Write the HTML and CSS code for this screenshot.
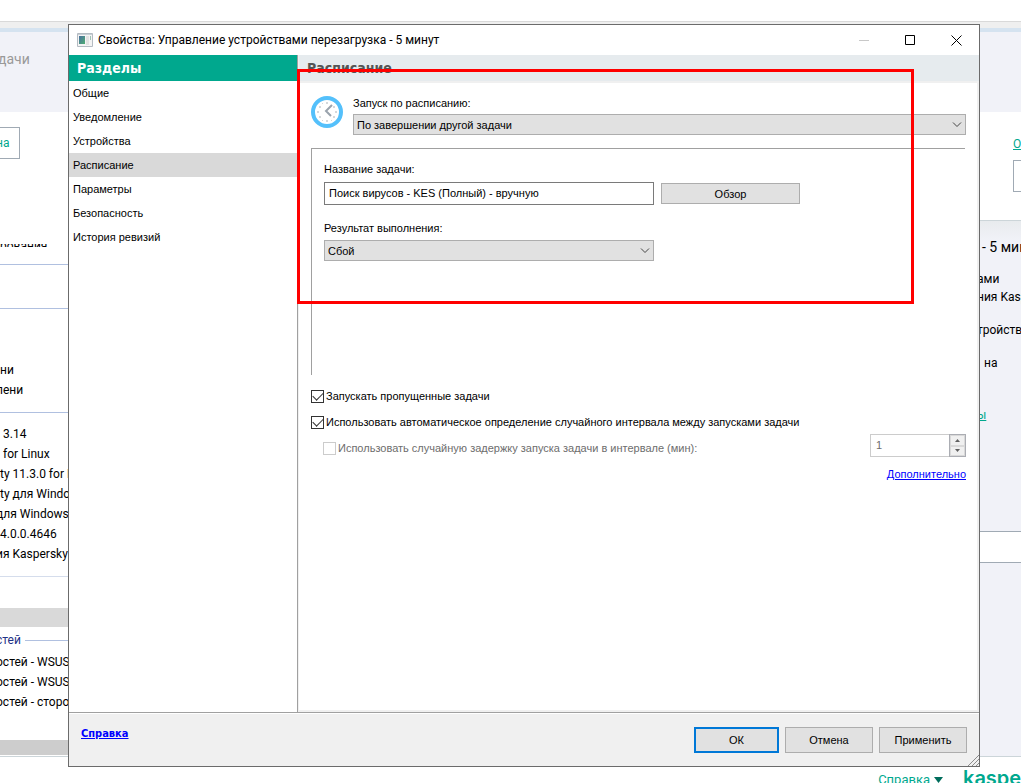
FILE: index.html
```html
<!DOCTYPE html>
<html lang="ru">
<head>
    <meta charset="UTF-8">
    <meta name="viewport" content="width=device-width, initial-scale=1.0">
    <title>Свойства: Управление устройствами перезагрузка - 5 минут</title>
    <link rel="stylesheet" href="styles.css">
</head>
<body>
    <!-- Console behind the dialog -->
    <div class="console">
        <div class="menubar"></div>
        <div class="heading">дачи</div>
        <div class="toolbar">
            <button class="tool-btn" type="button">на</button>
            <div class="filter">
                <a href="#">О</a>
                <div class="filter-box"></div>
            </div>
        </div>
        <div class="panes">
            <div class="task-list">
                <div class="cut-row"><span>рования</span></div>
                <div class="group group-empty"></div>
                <div class="group group-times">
                    <p>ни</p>
                    <p class="scrolled">лени</p>
                </div>
                <div class="group group-apps">
                    <p class="spaced">3.14</p>
                    <p class="spaced">for Linux</p>
                    <p>ty 11.3.0 for Linux</p>
                    <p>ty для Windows</p>
                    <p class="scrolled">для Windows</p>
                    <p>4.0.0.4646</p>
                    <p class="scrolled">ия Kaspersky S</p>
                </div>
                <div class="group group-last"></div>
                <div class="selected-row"></div>
                <div class="group-title"><span class="scrolled">стей</span></div>
                <p class="scrolled">остей - WSUS</p>
                <p class="scrolled">остей - WSUS</p>
                <p class="scrolled">остей - сторонних</p>
                <div class="scroll-row"></div>
            </div>
            <div class="details">
                <h2>- 5 мин</h2>
                <p>ами</p>
                <p>ния Kaspersky</p>
                <p class="apart">тройства</p>
                <p class="apart indent">на</p>
                <a href="#">ы</a>
                <div class="details-box"></div>
            </div>
        </div>
        <div class="statusbar">
            <a href="#">Справка <svg width="9" height="6" viewBox="0 0 9 6"><path d="M0 0h9L4.500 6z" fill="#006d5c"/></svg></a>
            <span class="brand">kaspersky</span>
        </div>
    </div>

    <div class="dialog">
        <div class="titlebar">
            <svg class="app-icon" width="16" height="14" viewBox="0 0 16 14">
                <defs>
                    <linearGradient id="screen" x1="0" y1="0" x2="1" y2="1">
                        <stop offset="0" stop-color="#4a6fa0"/>
                        <stop offset="1" stop-color="#4fae72"/>
                    </linearGradient>
                </defs>
                <path d="M.5 .5h15v13H.5z" fill="#f4f4f4" stroke="#b4bbc2"/>
                <path d="M1 1h14v1H1z" fill="#c9d0d6"/>
                <path d="M2 3h6v8H2z" fill="url(#screen)"/>
                <path d="M9 3h3v9H9z" fill="#e2e2e2"/>
                <path d="M13 3h1v4h-1z" fill="#9fc3b4"/>
            </svg>
            <span class="title">Свойства: Управление устройствами перезагрузка - 5 минут</span>
            <button class="win-btn" type="button" aria-label="Свернуть" disabled>
                <svg width="10" height="10" viewBox="0 0 10 10"><path d="M0 5.500h10" stroke="#c8c8c8"/></svg>
            </button>
            <button class="win-btn" type="button" aria-label="Развернуть">
                <svg width="10" height="10" viewBox="0 0 10 10"><path d="M.5 .5h9v9h-9z" fill="none" stroke="#000"/></svg>
            </button>
            <button class="win-btn" type="button" aria-label="Закрыть">
                <svg width="11" height="11" viewBox="0 0 11 11"><path d="M.5 .5l10 10M10.500 .5l-10 10" stroke="#000" fill="none"/></svg>
            </button>
        </div>

        <div class="body">
            <nav class="sections">
                <h1>Разделы</h1>
                <a href="#">Общие</a>
                <a href="#">Уведомление</a>
                <a href="#">Устройства</a>
                <a href="#" class="active">Расписание</a>
                <a href="#">Параметры</a>
                <a href="#">Безопасность</a>
                <a href="#">История ревизий</a>
            </nav>

            <form class="content">
                <h1>Расписание</h1>
                <div class="page">
                    <div class="schedule">
                        <svg class="clock" width="32" height="32" viewBox="0 0 32 32">
                            <circle cx="16" cy="16" r="14" fill="#fff" stroke="#54c0fb" stroke-width="4"/>
                            <g fill="#d5d8db">
                                <path d="M15 6h2v2h-2zM15 24h2v2h-2zM6 15h2v2H6zM24 15h2v2h-2z"/>
                                <path d="M8 10h2v2H8zM22 10h2v2h-2zM8 20h2v2H8zM22 20h2v2h-2zM11 7h1v1h-1zM11 24h1v1h-1zM20 24h1v1h-1z"/>
                            </g>
                            <path d="M21 9l-6 6 5 5" fill="none" stroke="#9aa3ad" stroke-width="2"/>
                        </svg>
                        <div class="field">
                            <label for="start">Запуск по расписанию:</label>
                            <div class="combo">
                                <select id="start">
                                    <option>По завершении другой задачи</option>
                                </select>
                                <svg width="10" height="6" viewBox="0 0 10 6"><path d="M1 .5L5 4.500 9 .5" fill="none" stroke="#444"/></svg>
                            </div>
                        </div>
                    </div>

                    <div class="settings">
                        <label for="task">Название задачи:</label>
                        <div class="task-row">
                            <input id="task" type="text" value="Поиск вирусов - KES (Полный) - вручную">
                            <button class="btn browse" type="button">Обзор</button>
                        </div>
                        <label for="result">Результат выполнения:</label>
                        <div class="combo result">
                            <select id="result">
                                <option>Сбой</option>
                            </select>
                            <svg width="10" height="6" viewBox="0 0 10 6"><path d="M1 .5L5 4.500 9 .5" fill="none" stroke="#444"/></svg>
                        </div>
                    </div>

                    <label class="check"><input type="checkbox" checked>Запускать пропущенные задачи</label>
                    <label class="check"><input type="checkbox" checked>Использовать автоматическое определение случайного интервала между запусками задачи</label>
                    <div class="delay">
                        <label class="check off"><input type="checkbox" disabled>Использовать случайную задержку запуска задачи в интервале (мин):</label>
                        <div class="spinner">
                            <input type="text" value="1" aria-label="Интервал (мин)" disabled>
                            <div class="spin-btns">
                                <button type="button" aria-label="Больше" disabled><svg width="5" height="3" viewBox="0 0 5 3"><path d="M0 3h5L2.500 0z" fill="#606060"/></svg></button>
                                <button type="button" aria-label="Меньше" disabled><svg width="5" height="3" viewBox="0 0 5 3"><path d="M0 0h5L2.500 3z" fill="#606060"/></svg></button>
                            </div>
                        </div>
                    </div>
                    <a class="more" href="#">Дополнительно</a>
                </div>
            </form>
        </div>

        <div class="footer">
            <a href="#">Справка</a>
            <button class="btn default" type="button">ОК</button>
            <button class="btn" type="button">Отмена</button>
            <button class="btn" type="button">Применить</button>
            <svg class="grip" width="12" height="12" viewBox="0 0 12 12"><path d="M1 12L12 1M5 12L12 5M9 12L12 9" stroke="#8c8c8c" fill="none"/></svg>
        </div>
    </div>

    <div class="marker"></div>
</body>
</html>
```

FILE: styles.css
```css
* {
    margin: 0;
    padding: 0;
    box-sizing: border-box;
}
body {
    position: relative;
    height: 100vh;
    overflow: hidden;
    background: #fff;
    color: #000;
    font-family: Tahoma, "Liberation Sans", sans-serif;
    font-size: 11px;
}
button, input, select {
    font: inherit;
    color: inherit;
    border-radius: 0;
}
svg {
    display: block;
}

/* Console */
.console {
    display: flex;
    flex-direction: column;
    height: 100vh;
    font-family: "Segoe UI", Roboto, sans-serif;
    font-size: 12px;
    white-space: nowrap;
}
.menubar {
    height: 28px;
    background: linear-gradient(#fff 21px, #d9d9d9 21px, #d9d9d9 22px, #efefef 22px);
}
.heading {
    height: 84px;
    padding-top: 16px;
    border-top: 4px solid #d5e3f0;
    background: #f1f2f8;
    color: #999;
    font-size: 14px;
    line-height: 22px;
    text-indent: -2px;
}
.toolbar {
    display: flex;
    justify-content: space-between;
    height: 109px;
    padding-top: 15px;
    border-bottom: 1px solid #ccd5d9;
}
.tool-btn {
    width: 20px;
    height: 32px;
    border: 1px solid #a0aab4;
    border-left: none;
    background: #fff;
    color: #00a88e;
    text-indent: -4px;
    text-align: left;
}
.filter {
    width: 8px;
    overflow: hidden;
    padding-top: 8px;
}
.filter a {
    display: block;
    line-height: 18px;
    color: #00a88e;
}
.filter-box {
    width: 40px;
    height: 32px;
    margin-top: 7px;
    border: 1px solid #a0aab4;
}
.panes {
    display: flex;
    flex: 1;
    min-height: 0;
}
.task-list {
    flex: 1;
    min-width: 0;
    margin-top: -1px;
    background: #fff;
    overflow: hidden;
}
.task-list p {
    line-height: 20px;
}
.task-list .scrolled {
    margin-left: -4px;
}
.cut-row {
    height: 44px;
    padding-top: 24px;
}
.cut-row span {
    display: block;
    height: 3px;
    line-height: 4px;
    overflow: hidden;
}
.group {
    border-top: 1px solid #b0c0e0;
}
.group-empty {
    height: 44px;
}
.group-times {
    height: 104px;
    padding-top: 51px;
}
.group-apps {
    height: 164px;
    padding-top: 11px;
}
.group-last {
    height: 32px;
    border-color: #d5ddec;
}
.spaced {
    padding-left: 3px;
}
.selected-row {
    height: 19px;
    background: #d9d9d9;
}
.group-title {
    display: flex;
    align-items: center;
    gap: 4px;
    height: 26px;
    margin-bottom: -1px;
    color: #1e3287;
}
.group-title::after {
    content: "";
    flex: 1;
    height: 1px;
    background: #b0c0e0;
}
.scroll-row {
    height: 15px;
    margin-top: 28px;
    background: #cdcdcd;
}
.details {
    width: 44px;
    background: linear-gradient(#e8ebee, #f1f2f8 20px);
    overflow: hidden;
}
.details h2 {
    padding: 16px 0 13px 5px;
    font-size: 14px;
    font-weight: normal;
    line-height: 20px;
}
.details p {
    line-height: 18px;
}
.details .apart {
    margin-top: 15px;
}
.details .indent {
    padding-left: 7px;
}
.details a {
    display: block;
    margin-top: 34px;
    line-height: 18px;
    color: #00a88e;
}
.details-box {
    height: 32px;
    margin-top: 107px;
    border: 1px solid #a0aab4;
    border-right: none;
    background: #fff;
}
.statusbar {
    display: flex;
    justify-content: flex-end;
    gap: 20px;
    height: 27px;
    padding-top: 10px;
    border-top: 1px solid #ccd5d9;
    line-height: 26px;
    overflow: hidden;
}
.statusbar a {
    display: flex;
    align-items: center;
    gap: 4px;
    height: 26px;
    color: #00a88e;
    font-size: 13px;
    text-decoration: none;
}
.brand {
    width: 58px;
    overflow: hidden;
    color: #00a88e;
    font-family: Inter, sans-serif;
    font-size: 20px;
    font-weight: 600;
    line-height: 22px;
}

/* Properties window */
.dialog {
    position: absolute;
    inset: 24px 41px 16px 68px;
    display: flex;
    flex-direction: column;
    border: 1px solid #6b6b6b;
    background: #f0f0f0;
}
.titlebar {
    display: flex;
    align-items: center;
    height: 30px;
    padding-left: 8px;
    background: #fff;
    font-family: "Segoe UI", Roboto, sans-serif;
    font-size: 12px;
}
.title {
    flex: 1;
    padding-left: 5px;
}
.win-btn {
    display: flex;
    align-items: center;
    justify-content: center;
    width: 46px;
    height: 30px;
    border: none;
    background: none;
}
.body {
    display: flex;
    flex: 1;
    min-height: 0;
    border-bottom: 1px solid #a0a0a0;
}
.sections {
    width: 229px;
    border-right: 1px solid #a0a0a0;
    background: #fff;
}
h1 {
    height: 26px;
    padding-left: 8px;
    font-family: "DejaVu Sans Condensed", "DejaVu Sans", sans-serif;
    font-size: 14px;
    font-weight: bold;
    line-height: 26px;
}
.sections h1 {
    background: #00a88e;
    color: #fff;
}
.sections a {
    display: block;
    padding-left: 4px;
    line-height: 24px;
    color: #000;
    text-decoration: none;
}
.sections .active {
    background: #d9d9d9;
}
.content {
    display: flex;
    flex: 1;
    flex-direction: column;
    padding-left: 1px;
}
.content h1 {
    background: #e6ebee;
    color: #555;
}
.page {
    display: flex;
    flex: 1;
    flex-direction: column;
    margin: 2px 2px 2px 0;
    padding: 11px 11px 0 12px;
    background: #fff;
}
.schedule {
    display: flex;
    gap: 10px;
}
.clock {
    margin-top: 2px;
}
.field {
    flex: 1;
}
.field label {
    display: block;
    line-height: 18px;
    padding-bottom: 2px;
}
.combo {
    position: relative;
}
.combo select {
    display: block;
    width: 100%;
    height: 21px;
    padding-left: 3px;
    border: 1px solid #adadad;
    background: #e1e1e1;
    appearance: none;
}
.combo svg {
    position: absolute;
    right: 4px;
    top: 8px;
    pointer-events: none;
}
.settings {
    height: 227px;
    margin: 13px 1px 12px 0;
    padding: 11px 0 0 12px;
    border-top: 1px solid #a0a0a0;
    border-left: 1px solid #a0a0a0;
}
.settings label {
    display: block;
    line-height: 18px;
}
.task-row {
    display: flex;
    align-items: center;
    gap: 7px;
    margin: 4px 0 14px;
}
.task-row input {
    width: 330px;
    height: 23px;
    padding: 0 4px 2px;
    border: 1px solid #7a7a7a;
}
.btn {
    height: 26px;
    border: 1px solid #adadad;
    background: #e1e1e1;
}
.browse {
    width: 139px;
    height: 21px;
}
.result {
    width: 330px;
    margin-top: 3px;
}
.check {
    display: flex;
    align-items: center;
    gap: 2px;
    height: 18px;
    margin-bottom: 8px;
    white-space: nowrap;
}
.check input {
    width: 13px;
    height: 13px;
    border: 1px solid #333;
    background: #fff;
    appearance: none;
}
.check input:checked {
    display: grid;
}
.check input:checked::after {
    content: "";
    width: 9px;
    height: 5px;
    margin: 1px;
    border-left: 1px solid #333;
    border-bottom: 1px solid #333;
    transform: rotate(-45deg);
}
.check input:disabled {
    border-color: #ccc;
}
.delay {
    display: flex;
    justify-content: space-between;
    height: 26px;
    padding-left: 12px;
}
.off {
    color: #6d6d6d;
}
.spinner {
    display: flex;
    width: 96px;
    height: 23px;
    margin-top: -5px;
    border: 1px solid #ccc;
}
.spinner input {
    flex: 1;
    min-width: 0;
    padding: 0 5px 2px;
    border: none;
    background: #fff;
    color: #6d6d6d;
}
.spin-btns {
    display: flex;
    flex-direction: column;
    width: 17px;
    margin: -1px;
    border: 1px solid #abadb3;
    background: #fff;
}
.spin-btns button {
    display: flex;
    flex: 1;
    align-items: center;
    justify-content: center;
    border: 1px solid #d9d9d9;
    background: #f0f0f0;
}
.more {
    align-self: flex-end;
    line-height: 18px;
    color: #00f;
}
.footer {
    position: relative;
    display: flex;
    align-items: flex-start;
    gap: 6px;
    height: 53px;
    padding: 13px 12px 0;
    border-top: 1px solid #fff;
}
.footer a {
    margin-right: auto;
    color: #00f;
    font-family: "DejaVu Sans Condensed", "DejaVu Sans", sans-serif;
    font-weight: bold;
}
.footer .btn {
    width: 88px;
}
.footer .default {
    width: 85px;
    border: 2px solid #0078d7;
}
.grip {
    position: absolute;
    right: 0;
    bottom: 0;
}

/* Red frame over the schedule block */
.marker {
    position: absolute;
    top: 69px;
    left: 297px;
    right: 107px;
    height: 235px;
    border: 3px solid #f00;
    pointer-events: none;
}
```
